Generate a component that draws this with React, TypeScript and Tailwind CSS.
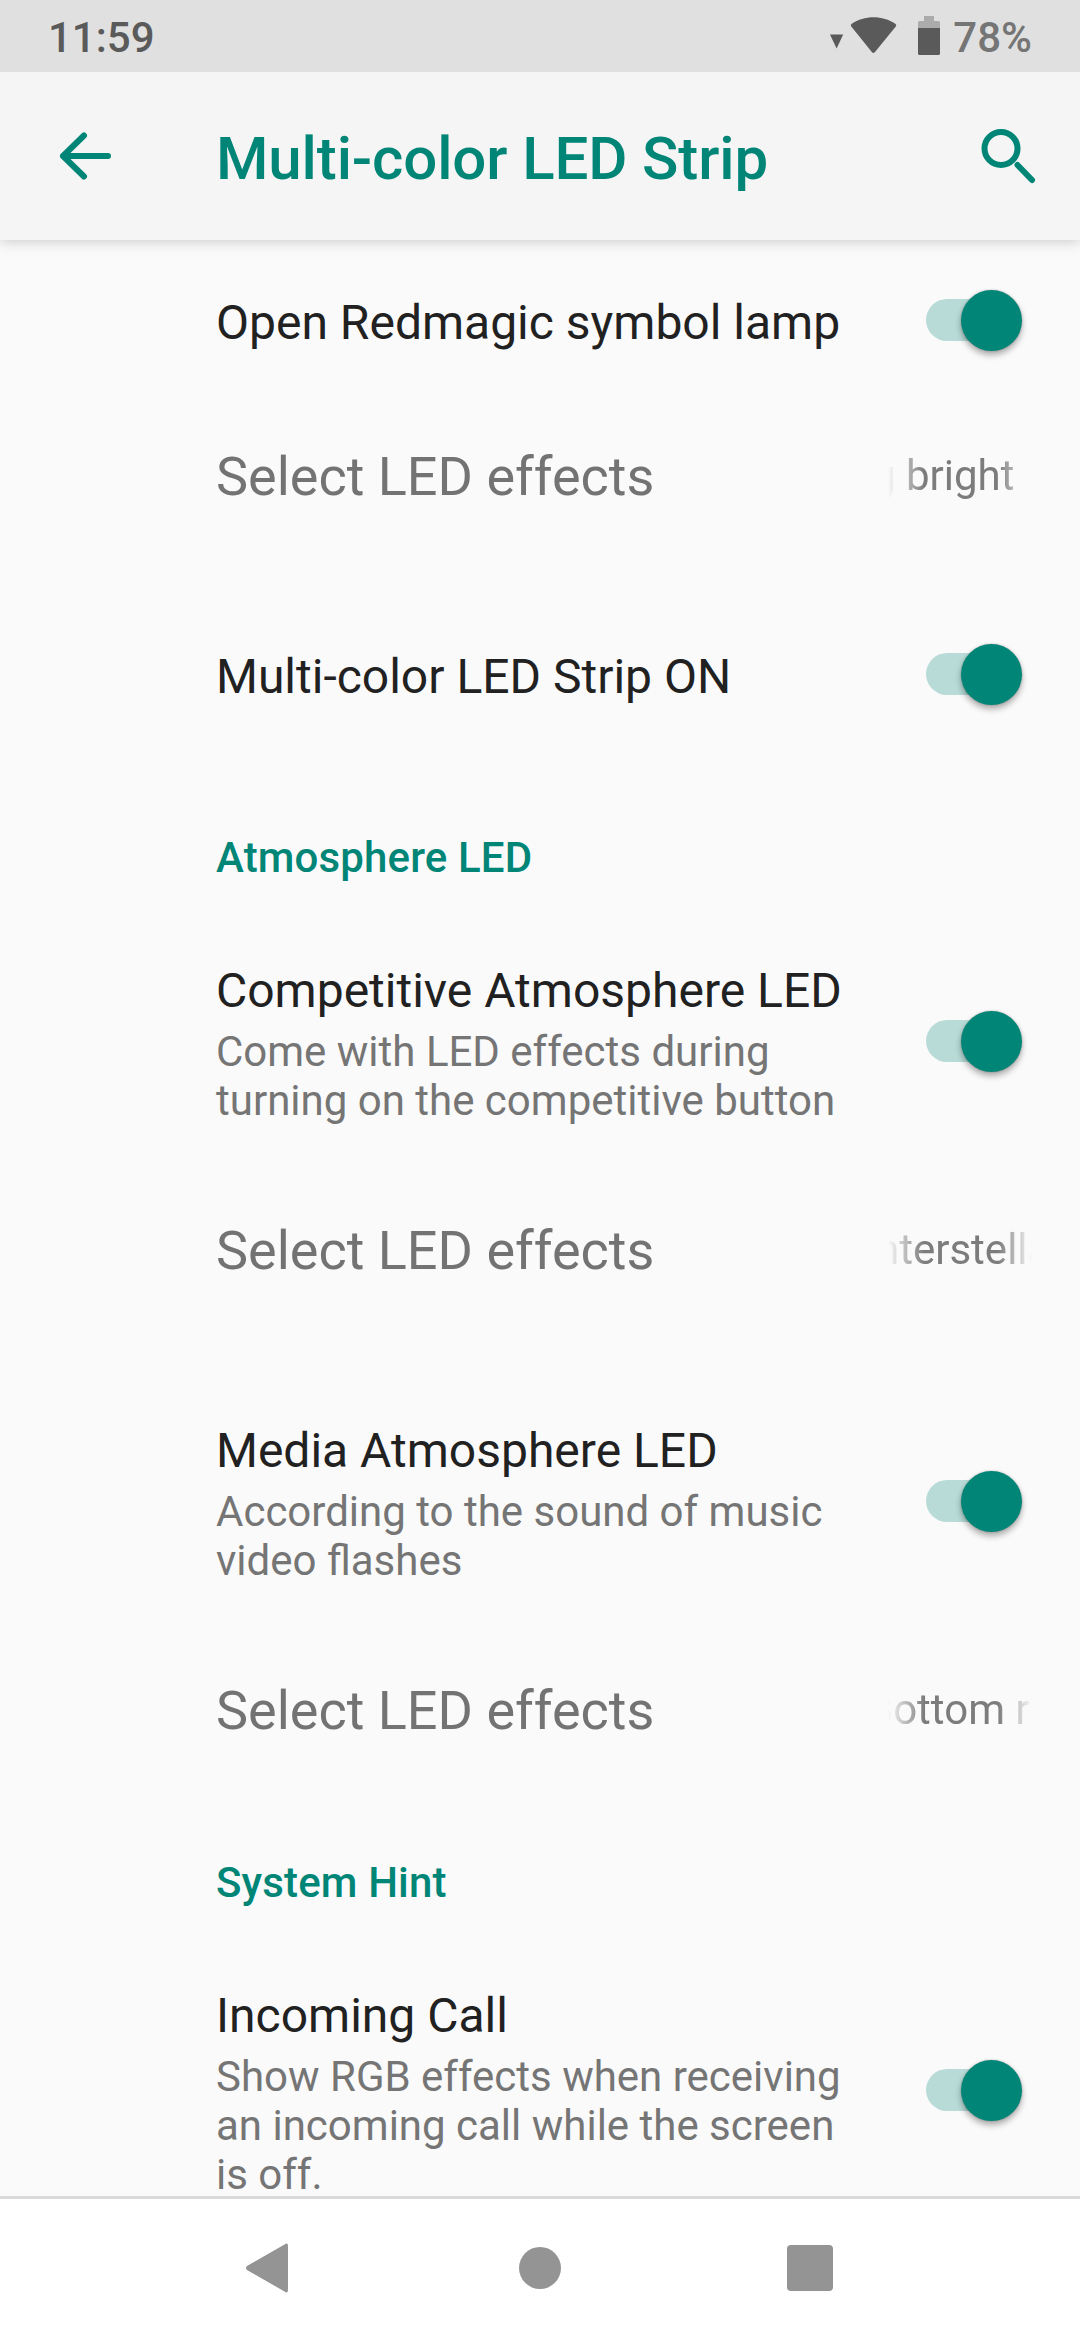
import type { ReactNode } from "react";

const Switch = () => (
  <div className="relative mb-[5px] h-[61px] w-24 shrink-0">
    <div className="mt-[9px] h-[42px] w-[93px] rounded-full bg-[#b8dbd7]" />
    <div className="absolute top-0 right-0 size-[61px] rounded-full bg-[#008577] shadow-[0_4px_6px_rgba(0,0,0,0.32),0_0_2px_rgba(0,0,0,0.25)]" />
  </div>
);

type SwitchRowProps = {
  title: string;
  className: string;
  children?: ReactNode;
};

const SwitchRow = ({ title, className, children }: SwitchRowProps) => (
  <div className={`flex shrink-0 items-center pr-[58px] pl-[216px] ${className}`}>
    <div className="flex-1">
      <p className="text-5xl leading-[56px] text-[#212121]">{title}</p>
      {children && (
        <p className="mt-2 text-[42px] leading-[49px] text-[#757575]">
          {children}
        </p>
      )}
    </div>
    <Switch />
  </div>
);

type SelectRowProps = {
  value: string;
  valueClassName: string;
  className?: string;
};

const SelectRow = ({ value, valueClassName, className = "" }: SelectRowProps) => (
  <div
    className={`flex h-[141px] shrink-0 items-center justify-between pr-12 pl-[216px] ${className}`}
  >
    <p className="text-[54px] leading-[64px] text-[#737373]">Select LED effects</p>
    {/* value scrolls as a marquee, both edges fade out */}
    <div className="mb-[2px] w-36 overflow-hidden mask-[linear-gradient(to_right,transparent,black_36px,black_110px,transparent)]">
      <p
        className={`text-[42px] leading-[50px] whitespace-nowrap text-[#7c7c7c] ${valueClassName}`}
      >
        {value}
      </p>
    </div>
  </div>
);

const Category = ({ title, className }: { title: string; className: string }) => (
  <h2
    className={`h-14 shrink-0 pl-[216px] text-[42px] leading-[56px] font-medium tracking-[0.15px] text-[#008577] ${className}`}
  >
    {title}
  </h2>
);

const StatusBar = () => (
  <div className="relative z-20 flex h-[72px] shrink-0 items-center justify-between bg-[#e0e0e0] pr-12 pl-12 text-[42px] leading-[50px] font-medium">
    <span className="mt-1 text-[#5a5a5a]">11:59</span>
    <div className="flex items-center">
      <svg width="112" height="72" viewBox="828 0 112 72" fill="#5a5a5a">
        <path d="M829 34.5h13.2L835.600 48.500z" />
        <path d="M850.300 26.500Q849 25 850.800 23.800C863 14.900 882 14.900 894.300 23.800Q896 25 894.800 26.500L874 52Q872.400 54 870.800 52Z" />
        <path d="M923 16h10v5h4.500q1.500 0 1.500 1.500V28h-22v-5.500q0-1.500 1.500-1.500h4.500z" fill="#ababab" />
        <path d="M917 28h22v25.500q0 1.500-1.500 1.500h-19q-1.500 0-1.500-1.500z" />
      </svg>
      <span className="mt-1 ml-3 text-[#757575]">78%</span>
    </div>
  </div>
);

const AppBar = () => (
  <header className="z-10 flex h-[168px] shrink-0 items-center bg-[#f5f5f5] pr-[43px] pl-[57px] shadow-[0_2px_12px_rgba(0,0,0,0.18)]">
    <svg
      width="58"
      height="52"
      viewBox="0 0 58 52"
      fill="none"
      stroke="#008577"
      strokeWidth="6"
      strokeLinecap="round"
      strokeLinejoin="round"
    >
      <path d="M51 26H6M27 5.500L6 26l21 20.500" />
    </svg>
    <h1 className="mt-[5px] ml-[101px] flex-1 text-[60px] leading-[70px] font-medium tracking-[-0.12px] text-[#008577]">
      Multi-color LED Strip
    </h1>
    <svg
      width="58"
      height="58"
      viewBox="0 0 58 58"
      fill="none"
      stroke="#008577"
      strokeWidth="6"
      strokeLinecap="round"
    >
      <circle cx="22" cy="21.500" r="16.500" />
      <path d="M38.500 38l14.500 15" />
    </svg>
  </header>
);

const NavBar = () => (
  <nav className="h-36 shrink-0 border-t-[3px] border-[#dadada] bg-white">
    <svg width="1080" height="141" viewBox="0 2199 1080 141" fill="#949494">
      <path d="M284.500 2244.500Q288 2242 288 2246V2290Q288 2294 284.500 2291.500L247 2270Q245 2268 247 2266Z" />
      <circle cx="540" cy="2268" r="21" />
      <rect x="787" y="2245" width="46" height="46" rx="4" />
    </svg>
  </nav>
);

export default function App() {
  return (
    <div className="flex h-[2340px] w-[1080px] flex-col overflow-hidden bg-[#fafafa] font-[Roboto,sans-serif]">
      <StatusBar />
      <AppBar />

      <main className="flex min-h-0 flex-1 flex-col overflow-hidden">
        <SwitchRow title="Open Redmagic symbol lamp" className="h-[166px]" />
        <SelectRow value="g bright" valueClassName="-ml-4" />
        <SwitchRow title="Multi-color LED Strip ON" className="mt-[55px] h-[150px]" />

        <Category title="Atmosphere LED" className="mt-[78px]" />
        <SwitchRow title="Competitive Atmosphere LED" className="mt-[50px] h-[216px]">
          Come with LED effects during
          <br />
          turning on the competitive button
        </SwitchRow>
        <SelectRow
          value="nterstella"
          valueClassName="-ml-[12px]"
          className="mt-7"
        />
        <SwitchRow title="Media Atmosphere LED" className="mt-[75px] h-[216px]">
          According to the sound of music
          <br />
          video flashes
        </SwitchRow>
        <SelectRow
          value="Bottom r"
          valueClassName="-ml-[21px]"
          className="mt-7"
        />

        <Category title="System Hint" className="mt-[74px]" />
        <SwitchRow title="Incoming Call" className="mt-[74px] h-[216px]">
          Show RGB effects when receiving
          <br />
          an incoming call while the screen
          <br />
          is off.
        </SwitchRow>
      </main>

      <NavBar />
    </div>
  );
}
